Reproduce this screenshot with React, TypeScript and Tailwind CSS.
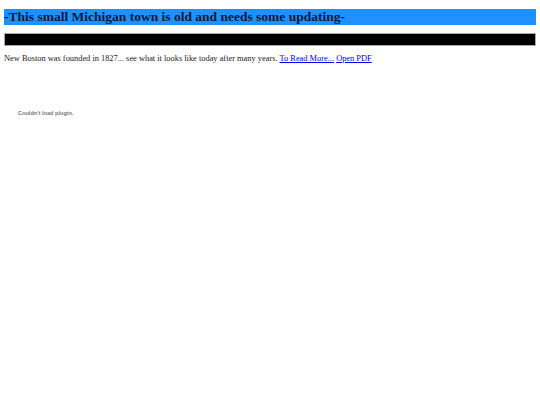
import React from "react";

const App: React.FC = () => {
  return (
    <div className="min-h-[405px] bg-white px-[4px] pt-[9px] font-['Liberation_Serif',serif] text-black">
      {/* heading bar */}
      <h1 className="h-[16px] bg-[#1e90ff] text-[13.5px] font-bold leading-[16px] text-[#0a1a3c]">
        -This small Michigan town is old and needs some updating-
      </h1>

      {/* black rule */}
      <div className="mt-[8px] h-[13px] border border-[#aaa] bg-black" />

      <p className="mt-[7px] text-[8.4px] leading-[11px] text-[#222]">
        New Boston was founded in 1827... see what it looks like today after many years.{" "}
        <a href="#" className="text-[#0000ee] underline">
          To Read More...
        </a>{" "}
        <a href="#" className="text-[#0000ee] underline">
          Open PDF
        </a>
      </p>

      {/* plugin placeholder */}
      <div className="mt-[45px] pl-[14px] font-['Liberation_Sans',sans-serif] text-[5.6px] font-bold text-[#777]">
        Couldn't load plugin.
      </div>
    </div>
  );
};

export default App;
